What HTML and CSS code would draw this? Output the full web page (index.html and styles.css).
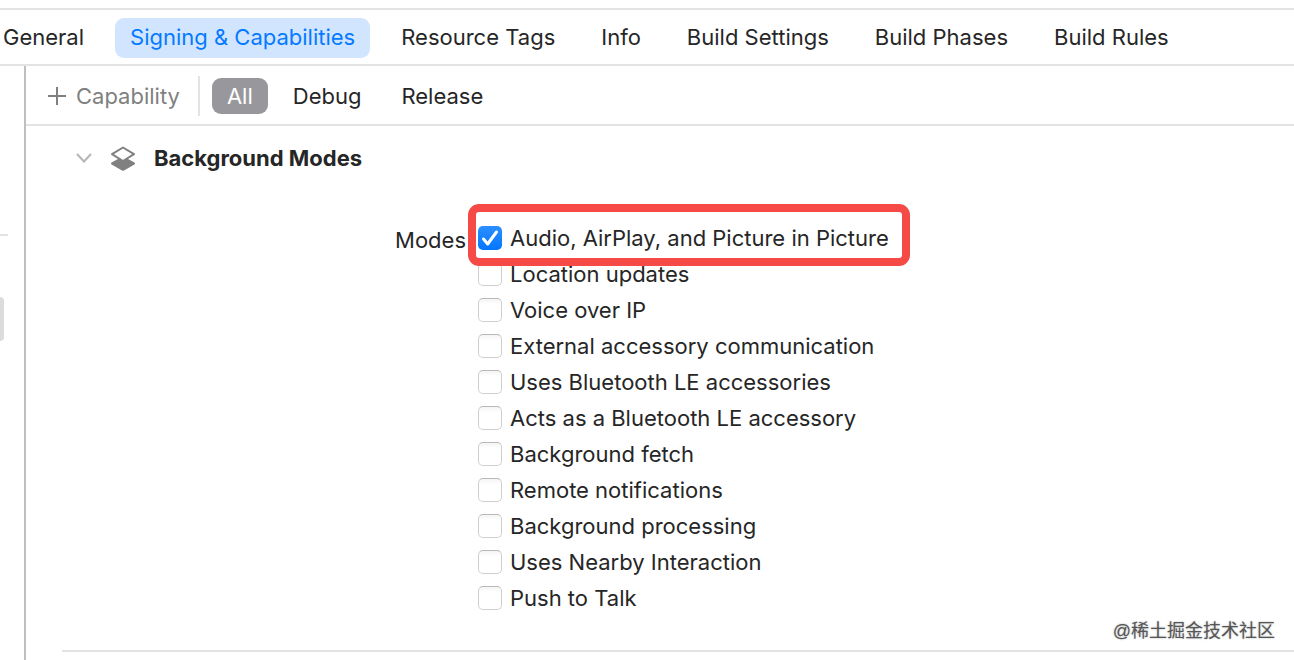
FILE: index.html
```html
<!DOCTYPE html>
<html lang="en">
<head>
    <meta charset="UTF-8">
    <meta name="viewport" content="width=device-width, initial-scale=1.0">
    <title>Signing &amp; Capabilities</title>
    <link rel="stylesheet" href="styles.css">
</head>
<body>
    <nav class="tabs">
        <button class="tab" type="button">General</button>
        <button class="tab active" type="button">Signing &amp; Capabilities</button>
        <button class="tab" type="button">Resource Tags</button>
        <button class="tab" type="button">Info</button>
        <button class="tab" type="button">Build Settings</button>
        <button class="tab" type="button">Build Phases</button>
        <button class="tab" type="button">Build Rules</button>
    </nav>

    <div class="workspace">
        <aside class="sidebar">
            <div class="sidebar-line"></div>
            <div class="sidebar-selection"></div>
        </aside>

        <main class="editor">
            <div class="filters">
                <button class="add" type="button">
                    <svg width="18" height="18" viewBox="0 0 18 18" aria-hidden="true"><path d="M9 0v18M0 9h18"/></svg>
                    Capability
                </button>
                <button class="filter selected" type="button">All</button>
                <button class="filter" type="button">Debug</button>
                <button class="filter" type="button">Release</button>
            </div>

            <section class="capability">
                <header class="capability-header">
                    <button class="toggle" type="button" aria-label="Collapse">
                        <svg width="16" height="10" viewBox="0 0 16 10"><path d="M1 1l7 7.5L15 1"/></svg>
                    </button>
                    <svg class="layers" width="26" height="28" viewBox="0 0 26 28" aria-hidden="true">
                        <path class="layer-bottom" d="M1 19.5Q1 18.800 2 18.200L8 15h10l6 3.200Q25 18.800 25 19.500Q25 20.200 24 20.800L14 26.500Q13 27 12 26.500L2 20.800Q1 20.200 1 19.500z"/>
                        <path class="layer-top" d="M13 3.500L24 10.200L13 17L2 10.200z"/>
                    </svg>
                    <h1>Background Modes</h1>
                </header>

                <div class="modes">
                    <span class="modes-label" id="modes-label">Modes</span>
                    <div class="mode-list" role="group" aria-labelledby="modes-label">
                        <label class="mode highlighted"><input type="checkbox" checked>Audio, AirPlay, and Picture in Picture</label>
                        <label class="mode"><input type="checkbox">Location updates</label>
                        <label class="mode"><input type="checkbox">Voice over IP</label>
                        <label class="mode"><input type="checkbox">External accessory communication</label>
                        <label class="mode"><input type="checkbox">Uses Bluetooth LE accessories</label>
                        <label class="mode"><input type="checkbox">Acts as a Bluetooth LE accessory</label>
                        <label class="mode"><input type="checkbox">Background fetch</label>
                        <label class="mode"><input type="checkbox">Remote notifications</label>
                        <label class="mode"><input type="checkbox">Background processing</label>
                        <label class="mode"><input type="checkbox">Uses Nearby Interaction</label>
                        <label class="mode"><input type="checkbox">Push to Talk</label>
                    </div>
                </div>
            </section>
        </main>
    </div>

    <div class="watermark" lang="zh-CN">@稀土掘金技术社区</div>
</body>
</html>
```

FILE: styles.css
```css
:root {
    --text-color: #262626;
    --muted-color: #808080;
    --line-color: #e3e3e3;
    --accent-color: #067aff;
    --highlight-color: #f54a45;
}
* {
    box-sizing: border-box;
}
body {
    display: flex;
    flex-direction: column;
    min-height: 100vh;
    margin: 0;
    padding-top: 8px;
    overflow-x: hidden;
    background-color: #fff;
    color: var(--text-color);
    font-family: Inter, "Liberation Sans", sans-serif;
    font-size: 22px;
    line-height: 36px;
}
button {
    border: 0;
    padding: 0;
    background: none;
    color: inherit;
    font: inherit;
    white-space: nowrap;
}
.tabs {
    display: flex;
    gap: 16px;
    padding: 8px 0 6px;
    border-top: 2px solid var(--line-color);
    border-bottom: 2px solid var(--line-color);
}
.tab {
    padding: 1px 15px 3px;
    border-radius: 9px;
}
.tab:first-child {
    padding-left: 3px;
}
.tab.active {
    background-color: #d1e5ff;
    color: var(--accent-color);
}
.workspace {
    display: flex;
    flex: 1;
}
.sidebar {
    width: 26px;
    padding-top: 168px;
    border-right: 2px solid #bfbfbf;
}
.sidebar-line {
    width: 8px;
    height: 2px;
    background-color: var(--line-color);
}
.sidebar-selection {
    width: 4px;
    height: 44px;
    margin-top: 61px;
    border-radius: 0 4px 4px 0;
    background-color: #dcdcdc;
}
.editor {
    flex: 1;
}
.filters {
    display: flex;
    align-items: center;
    gap: 10px;
    height: 60px;
    padding: 2px 0 0 22px;
    border-bottom: 2px solid var(--line-color);
}
.add {
    display: flex;
    align-items: center;
    gap: 10px;
    height: 40px;
    margin-right: 2px;
    padding-right: 18px;
    border-right: 2px solid var(--line-color);
    color: var(--muted-color);
}
.add svg {
    fill: none;
    stroke: currentColor;
    stroke-width: 2;
}
.filter {
    padding: 0 15px;
    border-radius: 9px;
}
.filter.selected {
    background-color: #98989c;
    color: #fff;
}
.capability {
    margin-left: 36px;
    padding-bottom: 34px;
    border-bottom: 2px solid var(--line-color);
}
.capability-header {
    display: flex;
    align-items: center;
    padding: 14px 14px 0;
}
.toggle {
    display: flex;
    margin-right: 18px;
}
.toggle svg {
    fill: none;
    stroke: #b5b5b5;
    stroke-width: 2;
}
.layer-bottom {
    fill: var(--muted-color);
}
.layer-top {
    fill: #fff;
    stroke: var(--muted-color);
    stroke-width: 2;
    stroke-linejoin: round;
}
h1 {
    margin: 0 0 0 18px;
    font-size: 22px;
    font-weight: 700;
}
.modes {
    display: grid;
    grid-template-columns: 404px auto;
    column-gap: 12px;
    padding-top: 44px;
}
.modes-label {
    padding-top: 2px;
    text-align: right;
}
.mode-list {
    display: flex;
    flex-direction: column;
    align-items: flex-start;
}
.mode {
    display: flex;
    align-items: center;
    gap: 8px;
    position: relative;
    white-space: nowrap;
}
.mode input {
    appearance: none;
    width: 24px;
    height: 24px;
    margin: 0;
    border: 1px solid #cfcfcf;
    border-top-color: #b9b9b9;
    border-radius: 5px;
    background: linear-gradient(#f4f4f4, #fff 25%);
}
.mode input:checked {
    border: 0;
    background:
        url("data:image/svg+xml,%3Csvg xmlns='http://www.w3.org/2000/svg' viewBox='0 0 24 24'%3E%3Cpath d='M5.500 13l4.200 5L18.500 6' fill='none' stroke='white' stroke-width='3' stroke-linecap='round' stroke-linejoin='round'/%3E%3C/svg%3E"),
        linear-gradient(#2b8fff, #0476ff);
}
/* red frame drawn over the first option */
.highlighted::after {
    content: "";
    position: absolute;
    z-index: 1;
    inset: -16px -21px -10px -10px;
    border: 8px solid var(--highlight-color);
    border-radius: 11px;
}
.watermark {
    position: absolute;
    right: 19px;
    bottom: 11px;
    color: #555;
    font-family: "Liberation Sans", "Noto Sans CJK SC", sans-serif;
    font-size: 18px;
    text-shadow: 0 0 2px #aaa;
}
```
